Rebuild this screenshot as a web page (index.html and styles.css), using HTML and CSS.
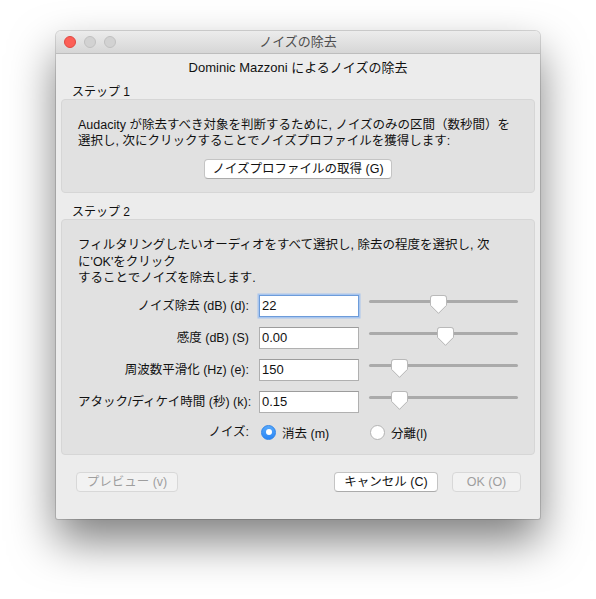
FILE: index.html
```html
<!DOCTYPE html>
<html lang="ja">
<head>
<meta charset="utf-8">
<title>ノイズの除去</title>
<link rel="stylesheet" href="styles.css">
</head>
<body>
<div class="window">
  <div class="titlebar">
    <div class="lights">
      <span class="light red"></span>
      <span class="light grey"></span>
      <span class="light grey"></span>
    </div>
    <div class="title">ノイズの除去</div>
    <div></div>
  </div>
  <div class="content">
    <div class="heading">Dominic Mazzoni によるノイズの除去</div>

    <div class="step-label">ステップ 1</div>
    <div class="group g1">
      <p class="desc">Audacity が除去すべき対象を判断するために, ノイズのみの区間（数秒間）を<br>選択し, 次にクリックすることでノイズプロファイルを獲得します:</p>
      <div class="center"><button class="btn profile">ノイズプロファイルの取得 (G)</button></div>
    </div>

    <div class="step-label">ステップ 2</div>
    <div class="group g2">
      <p class="desc desc2">フィルタリングしたいオーディオをすべて選択し, 除去の程度を選択し, 次<br>に'OK'をクリック<br>することでノイズを除去します.</p>
      <div class="form">
        <label class="lbl">ノイズ除去 (dB) (d):</label>
        <div class="field focus">22</div>
        <div class="slider"><span class="track"></span><svg class="thumb" style="left:61px" width="17" height="19" viewBox="0 0 17 19"><path d="M3 .5H14Q16.5 .5 16.5 3V10.3L8.5 18.3L.5 10.3V3Q.5 .5 3 .5Z" fill="#fff" stroke="#b9b9b9"/></svg></div>

        <label class="lbl">感度 (dB) (S)</label>
        <div class="field">0.00</div>
        <div class="slider"><span class="track"></span><svg class="thumb" style="left:68px" width="17" height="19" viewBox="0 0 17 19"><path d="M3 .5H14Q16.5 .5 16.5 3V10.3L8.5 18.3L.5 10.3V3Q.5 .5 3 .5Z" fill="#fff" stroke="#b9b9b9"/></svg></div>

        <label class="lbl">周波数平滑化 (Hz) (e):</label>
        <div class="field">150</div>
        <div class="slider"><span class="track"></span><svg class="thumb" style="left:22px" width="17" height="19" viewBox="0 0 17 19"><path d="M3 .5H14Q16.5 .5 16.5 3V10.3L8.5 18.3L.5 10.3V3Q.5 .5 3 .5Z" fill="#fff" stroke="#b9b9b9"/></svg></div>

        <label class="lbl">アタック/ディケイ時間 (秒) (k):</label>
        <div class="field">0.15</div>
        <div class="slider"><span class="track"></span><svg class="thumb" style="left:22px" width="17" height="19" viewBox="0 0 17 19"><path d="M3 .5H14Q16.5 .5 16.5 3V10.3L8.5 18.3L.5 10.3V3Q.5 .5 3 .5Z" fill="#fff" stroke="#b9b9b9"/></svg></div>

        <label class="lbl radio-lbl">ノイズ:</label>
        <div class="radios">
          <span class="opt first"><span class="radio on"></span>消去 (m)</span>
          <span class="opt"><span class="radio"></span>分離(l)</span>
        </div>
      </div>
    </div>

    <div class="footer">
      <button class="btn disabled preview">プレビュー (v)</button>
      <span class="spacer"></span>
      <button class="btn cancel">キャンセル (C)</button>
      <button class="btn disabled ok">OK (O)</button>
    </div>
  </div>
</div>
</body>
</html>
```

FILE: styles.css
```css
html, body {
  margin: 0;
  padding: 0;
  background: #ffffff;
}
body {
  box-sizing: border-box;
  min-height: 599px;
  padding: 31px 0 0 56px;
  font-family: "Liberation Sans", "Noto Sans CJK JP", sans-serif;
  font-size: 12.5px;
  color: #111;
}
.window {
  width: 484px;
  height: 488px;
  background: #ececec;
  border-radius: 5px 5px 2px 2px;
  box-shadow: 0 22px 45px rgba(0, 0, 0, 0.5), 0 0 0 1px rgba(0, 0, 0, 0.14);
  overflow: hidden;
}
.titlebar {
  height: 22px;
  border-bottom: 1px solid #bdbdbd;
  background: linear-gradient(#ececec, #d6d6d6);
  display: grid;
  grid-template-columns: 1fr auto 1fr;
  align-items: center;
}
.lights {
  display: flex;
  gap: 8px;
  padding-left: 8px;
}
.light {
  width: 12px;
  height: 12px;
  border-radius: 50%;
  box-sizing: border-box;
}
.red {
  background: #fc5f57;
  border: 1px solid #df4841;
}
.grey {
  background: #d2d2d2;
  border: 1px solid #c0c0c0;
}
.title {
  color: #4d4d4d;
  font-size: 13px;
  line-height: 16px;
}
.content {
  padding: 6px 0 0 0;
}
.heading {
  text-align: center;
  line-height: 16px;
  font-size: 13px;
}
.step-label {
  line-height: 14px;
  margin: 9px 0 0 16px;
  font-size: 12px;
}
.group {
  margin: 0 5px;
  background: #e1e1e1;
  border: 1px solid #d6d6d6;
  border-radius: 4px;
  box-sizing: border-box;
}
.g1 {
  height: 94px;
  padding-top: 17px;
}
.g1 + .step-label {
  margin-top: 12px;
}
.g2 {
  height: 236px;
  padding-top: 17px;
}
.desc {
  margin: 0 0 0 16px;
  line-height: 16px;
}
.desc2 {
  line-height: 16.5px;
}
.center {
  display: flex;
  justify-content: center;
  margin-top: 10px;
}
.btn {
  font: inherit;
  font-size: 12.5px;
  color: #111;
  height: 20px;
  line-height: 18px;
  padding: 0;
  background: #ffffff;
  border: 1px solid #c4c4c4;
  border-bottom-color: #ababab;
  border-radius: 4px;
  box-sizing: border-box;
}
.profile {
  width: 188px;
}
.form {
  display: grid;
  grid-template-columns: 171px 100px 149px;
  column-gap: 10px;
  row-gap: 10px;
  padding-left: 16px;
  margin-top: 8.5px;
  align-items: center;
}
.lbl {
  text-align: right;
  line-height: 22px;
  white-space: nowrap;
}
.field {
  height: 22px;
  box-sizing: border-box;
  background: #fff;
  border: 1px solid #b0b0b0;
  border-top-color: #9c9c9c;
  padding-left: 2px;
  line-height: 20px;
  font-size: 13px;
}
.field.focus {
  border: 1px solid #6d9cda;
  box-shadow: 0 0 0 1.5px #a9c6ee;
}
.slider {
  position: relative;
  height: 22px;
}
.track {
  position: absolute;
  left: 0;
  right: 0;
  top: 5px;
  height: 3px;
  border-radius: 2px;
  background: #aaaaaa;
}
.thumb {
  position: absolute;
  top: 0;
  filter: drop-shadow(0 0.5px 0.5px rgba(0, 0, 0, 0.15));
}
.radio-lbl {
  margin-top: -1px;
  line-height: 20px;
}
.radios {
  grid-column: 2 / 4;
  display: flex;
  align-items: center;
  height: 20px;
  margin-top: -1px;
}
.opt {
  display: flex;
  align-items: center;
  gap: 6px;
  white-space: nowrap;
}
.opt.first {
  width: 109px;
  margin-left: 2px;
}
.radio {
  width: 15px;
  height: 15px;
  border-radius: 50%;
  box-sizing: border-box;
  background: #fff;
  border: 1px solid #b3b3b3;
  display: inline-flex;
  align-items: center;
  justify-content: center;
}
.radio.on {
  background: linear-gradient(#58a9fb, #2a86f5);
  border: 1px solid #2c83ea;
}
.radio.on::after {
  content: "";
  width: 6px;
  height: 6px;
  border-radius: 50%;
  background: #fff;
}
.footer {
  display: flex;
  margin-top: 17px;
  padding: 0 19px 0 20px;
  gap: 14px;
}
.spacer {
  flex: 1;
}
.preview {
  width: 102px;
}
.cancel {
  width: 104px;
}
.ok {
  width: 69px;
}
.btn.disabled {
  background: #f2f2f2;
  border-color: #d8d8d8;
  color: #9e9e9e;
}
```
